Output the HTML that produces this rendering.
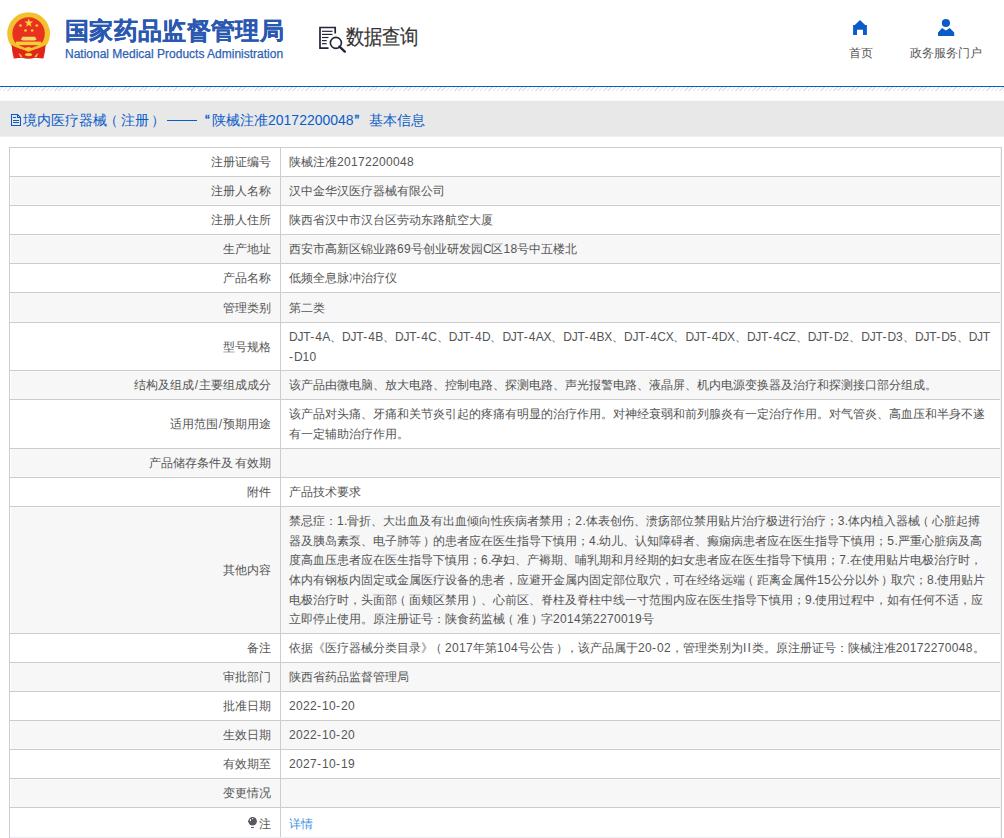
<!DOCTYPE html>
<html><head><meta charset="utf-8">
<style>
*{margin:0;padding:0;box-sizing:border-box}
html,body{width:1004px;height:838px;overflow:hidden;background:#fff}
body{font-family:"Liberation Sans",sans-serif;position:relative;color:#555}
.abs{position:absolute;white-space:nowrap}
#title{left:65px;top:15px;-webkit-text-stroke:.2px #2a58b0;letter-spacing:.35px;font-size:24px;font-weight:bold;color:#2a58b0;line-height:32px}
#sub{left:65px;top:46px;-webkit-text-stroke:.25px #2f5fb3;font-size:12px;color:#2f5fb3;line-height:16px}
#sj{left:346px;top:22px;font-size:18px;color:#333;-webkit-text-stroke:.15px #333;line-height:28px;transform:scaleY(1.14);transform-origin:0 5px}
.nav{font-size:12px;color:#555;line-height:16px}
#bluel{left:0;top:86px;width:1004px;height:1px;background:#0b5cc8}
#stripe{left:0;top:87px;width:1004px;height:4px;
 background:repeating-linear-gradient(135deg,#fff 0,#fff 1.6px,#e2e2e2 1.6px,#e2e2e2 2.6px,#fff 2.6px,#fff 3.01px)}
#bar{left:0;top:101px;width:1004px;height:35px;background:#e8e8e8}
.crumb{top:110px;font-size:14px;color:#0b5cc8;line-height:20px}
#tbl{position:absolute;left:9px;top:147px;width:993px;height:700px;border:1px solid #cdcdcd;border-bottom:none}
.row{position:absolute;left:0;width:990px;border-bottom:1px solid #cdcdcd}
.row.g .bg{position:absolute;left:1px;right:0;top:0;bottom:0;background:#f7f7f7}
.lab{position:absolute;left:0;width:270px;padding-right:9px;top:0;bottom:0;display:flex;align-items:center;justify-content:flex-end;font-size:12px;line-height:19.6px;color:#555}
.div{position:absolute;left:270px;top:0;bottom:0;width:1px;background:#cdcdcd}
.val{position:absolute;left:279px;width:706px;top:0;bottom:0;display:flex;align-items:center;font-size:12px;line-height:19.6px;color:#555;white-space:nowrap}
.lnk{color:#3a8ee6}
.row.last{border-bottom:none}
#strip{left:10px;top:837px;width:990px;height:1px;background:#eceef5}
#rcol{left:1000px;top:148px;width:1px;height:690px;background:#f4f5fa}
.lab span,.val div{position:relative;top:1px}
b{font-weight:normal}
b.d{letter-spacing:.33px}
b.h{letter-spacing:1px}
b.u{letter-spacing:-.25px}
b.s{padding:0 .9px}
b.lp{position:relative;left:-3.5px}
b.rp{position:relative;left:2px}
b.sp{letter-spacing:-1.5px}
b.ii{letter-spacing:1px}
</style></head><body>

<!-- emblem -->
<svg class="abs" style="left:0;top:0" width="60" height="70" viewBox="0 0 60 70">
 <circle cx="28.6" cy="33.6" r="21.4" fill="#f3c12e"/>
 <circle cx="28.6" cy="33.4" r="16.2" fill="#e8321f"/>
 <polygon points="28.8,18.4 29.9,21.5 33.1,21.6 30.6,23.6 31.5,26.7 28.8,24.9 26.1,26.7 27,23.6 24.5,21.6 27.7,21.5" fill="#f7d23a"/>
 <circle cx="20.5" cy="25.5" r="1.35" fill="#f5cf3a"/>
 <circle cx="36.8" cy="25.5" r="1.35" fill="#f5cf3a"/>
 <circle cx="25.5" cy="30.5" r="1.35" fill="#f5cf3a"/>
 <circle cx="32.2" cy="30.5" r="1.35" fill="#f5cf3a"/>
 <polygon points="20.8,39.6 22.5,36.7 35,36.7 36.6,39.6 34.5,40.6 23,40.6" fill="#f7d86e"/>
 <rect x="15.9" y="41.6" width="25.2" height="3.5" fill="#f6cc3c"/>
 <path d="M11.6 45 Q12 52 13.8 58.5 L22 57.8 Q28.5 59.6 35 57.8 L43.4 58.5 Q45.2 52 45.6 45 Q37 50 28.5 50 Q20 50 11.6 45 Z" fill="#e0261c"/>
 <path d="M12.5 43.6 Q21 47.5 28.5 50.6 Q36 47.5 44.6 43.6" fill="none" stroke="#f3c12e" stroke-width="2.3"/>
 <ellipse cx="28.5" cy="48.8" rx="3.2" ry="1.8" fill="#f5cb32"/>
 <ellipse cx="28.5" cy="54.6" rx="3.6" ry="1.6" fill="#f5d03a"/>
 <path d="M18.5 53 Q21 54 22.5 57 L20.5 57 Q19.5 55 18.5 53 Z" fill="#f3d040"/>
 <path d="M38.5 53 Q36 54 34.5 57 L36.5 57 Q37.5 55 38.5 53 Z" fill="#f3d040"/>
</svg>
<div id="title" class="abs">国家药品监督管理局</div>
<div id="sub" class="abs">National Medical Products Administration</div>

<!-- data query icon -->
<svg class="abs" style="left:310px;top:20px" width="40" height="40" viewBox="310 20 40 40">
 <path d="M328.5 48.2 H320 V27.5 H335.2 V33.5" fill="none" stroke="#23233a" stroke-width="1.7"/>
 <g stroke="#23233a" stroke-width="1.2" fill="none">
  <line x1="322" y1="31.3" x2="332.5" y2="31.3"/>
  <line x1="322" y1="34.4" x2="332.5" y2="34.4"/>
  <line x1="322" y1="37.5" x2="328.5" y2="37.5"/>
  <line x1="322" y1="40.6" x2="326.7" y2="40.6"/>
  <line x1="322" y1="43.7" x2="326.7" y2="43.7"/>
 </g>
 <circle cx="335.9" cy="42.9" r="5.5" fill="none" stroke="#23233a" stroke-width="1.6"/>
 <line x1="339.5" y1="46.6" x2="344.8" y2="51.6" stroke="#23233a" stroke-width="2.4" stroke-linecap="round"/>
</svg>
<div id="sj" class="abs">数据查询</div>

<!-- nav -->
<svg class="abs" style="left:850px;top:16px" width="20" height="22" viewBox="850 16 20 22">
 <path d="M853.1 35 V25 H854.9 L860 19.9 L865.1 25 H866.9 V35 H863 V29.7 H857 V35 Z" fill="#0b5cc8"/>
</svg>
<div class="abs nav" style="left:849px;top:45px">首页</div>
<svg class="abs" style="left:934px;top:14px" width="24" height="26" viewBox="934 14 24 26">
 <circle cx="945.9" cy="23" r="4.1" fill="#0b5cc8"/>
 <path d="M938 36 V32.5 L942 27.9 L945.9 30.6 L949.8 27.9 L954.2 32.5 V36 Z" fill="#0b5cc8"/>
</svg>
<div class="abs nav" style="left:910px;top:45px">政务服务门户</div>

<div id="bluel" class="abs"></div>
<div id="stripe" class="abs"></div>
<div id="bar" class="abs"></div>
<div class="abs" style="left:0;top:136px;width:1004px;height:1px;background:#edf0f6"></div>
<div class="abs" style="left:0;top:99px;width:1004px;height:2px;background:linear-gradient(#fff,#f6f6f6)"></div>
<svg class="abs" style="left:10px;top:112px" width="13" height="16" viewBox="10 112 13 16">
 <path d="M11.5 114.5 H17.5 L20.5 117.5 V125.5 H11.5 Z" fill="none" stroke="#0b5cc8" stroke-width="1.05"/>
 <path d="M17.5 114.5 V117.5 H20.5" fill="none" stroke="#0b5cc8" stroke-width="1.05"/>
 <path d="M18 115 L20 117" stroke="#0b5cc8" stroke-width="1"/>
 <g stroke="#0b5cc8" stroke-width="1">
 <line x1="13" y1="117.5" x2="16" y2="117.5"/>
 <line x1="13" y1="120.5" x2="19" y2="120.5"/>
 <line x1="13" y1="122.5" x2="19" y2="122.5"/>
 </g>
</svg>
<div class="abs crumb" style="left:23px">境内医疗器械</div>
<div class="abs crumb" style="left:103.5px">（</div>
<div class="abs crumb" style="left:121px">注册</div>
<div class="abs crumb" style="left:151px">）</div>
<div class="abs" style="left:167px;top:120px;width:30px;height:1px;background:#0b5cc8"></div>
<div class="abs crumb" style="left:205px;-webkit-text-stroke:.4px #0b5cc8">“</div>
<div class="abs crumb" style="left:212px">陕械注准20172200048</div>
<div class="abs crumb" style="left:354.5px;-webkit-text-stroke:.4px #0b5cc8">”</div>
<div class="abs crumb" style="left:369px">基本信息</div>

<div id="rcol" class="abs"></div>
<div id="tbl">
<div class="row" style="top:0px;height:29px"><div class="bg"></div><div class="lab"><span>注册证编号</span></div><div class="div"></div><div class="val"><div>陕械注准<b class="d">20172200048</b></div></div></div>
<div class="row g" style="top:29px;height:29px"><div class="bg"></div><div class="lab"><span>注册人名称</span></div><div class="div"></div><div class="val"><div>汉中金华汉医疗器械有限公司</div></div></div>
<div class="row" style="top:58px;height:29px"><div class="bg"></div><div class="lab"><span>注册人住所</span></div><div class="div"></div><div class="val"><div>陕西省汉中市汉台区劳动东路航空大厦</div></div></div>
<div class="row g" style="top:87px;height:29px"><div class="bg"></div><div class="lab"><span>生产地址</span></div><div class="div"></div><div class="val"><div>西安市高新区锦业路<b class="d">69</b>号创业研发园<b class="u">C</b>区<b class="d">18</b>号中五楼北</div></div></div>
<div class="row" style="top:116px;height:29px"><div class="bg"></div><div class="lab"><span>产品名称</span></div><div class="div"></div><div class="val"><div>低频全息脉冲治疗仪</div></div></div>
<div class="row g" style="top:145px;height:30px"><div class="bg"></div><div class="lab"><span>管理类别</span></div><div class="div"></div><div class="val"><div>第二类</div></div></div>
<div class="row" style="top:175px;height:48px"><div class="bg"></div><div class="lab"><span>型号规格</span></div><div class="div"></div><div class="val"><div><b class="u">DJT</b><b class="h">-</b><b class="d">4</b><b class="u">A</b>、<b class="u">DJT</b><b class="h">-</b><b class="d">4</b><b class="u">B</b>、<b class="u">DJT</b><b class="h">-</b><b class="d">4</b><b class="u">C</b>、<b class="u">DJT</b><b class="h">-</b><b class="d">4</b><b class="u">D</b>、<b class="u">DJT</b><b class="h">-</b><b class="d">4</b><b class="u">AX</b>、<b class="u">DJT</b><b class="h">-</b><b class="d">4</b><b class="u">BX</b>、<b class="u">DJT</b><b class="h">-</b><b class="d">4</b><b class="u">CX</b>、<b class="u">DJT</b><b class="h">-</b><b class="d">4</b><b class="u">DX</b>、<b class="u">DJT</b><b class="h">-</b><b class="d">4</b><b class="u">CZ</b>、<b class="u">DJT</b><b class="h">-</b><b class="u">D</b><b class="d">2</b>、<b class="u">DJT</b><b class="h">-</b><b class="u">D</b><b class="d">3</b>、<b class="u">DJT</b><b class="h">-</b><b class="u">D</b><b class="d">5</b>、<b class="u">DJT</b><br><b class="h">-</b><b class="u">D</b><b class="d">10</b></div></div></div>
<div class="row g" style="top:223px;height:29px"><div class="bg"></div><div class="lab"><span>结构及组成<b class="s">/</b>主要组成成分</span></div><div class="div"></div><div class="val"><div>该产品由微电脑、放大电路、控制电路、探测电路、声光报警电路、液晶屏、机内电源变换器及治疗和探测接口部分组成。</div></div></div>
<div class="row" style="top:252px;height:49px"><div class="bg"></div><div class="lab"><span>适用范围<b class="s">/</b>预期用途</span></div><div class="div"></div><div class="val"><div>该产品对头痛、牙痛和关节炎引起的疼痛有明显的治疗作用。对神经衰弱和前列腺炎有一定治疗作用。对气管炎、高血压和半身不遂<br>有一定辅助治疗作用。</div></div></div>
<div class="row g" style="top:301px;height:29px"><div class="bg"></div><div class="lab"><span>产品储存条件及<b class="sp"> </b>有效期</span></div><div class="div"></div><div class="val"><div></div></div></div>
<div class="row" style="top:330px;height:29px"><div class="bg"></div><div class="lab"><span>附件</span></div><div class="div"></div><div class="val"><div>产品技术要求</div></div></div>
<div class="row g" style="top:359px;height:127px"><div class="bg"></div><div class="lab"><span>其他内容</span></div><div class="div"></div><div class="val"><div>禁忌症：<b class="d">1</b>.骨折、大出血及有出血倾向性疾病者禁用；<b class="d">2</b>.体表创伤、溃疡部位禁用贴片治疗极进行治疗；<b class="d">3</b>.体内植入器械<b class="lp">（</b>心脏起搏<br>器及胰岛素泵、电子肺等<b class="rp">）</b>的患者应在医生指导下慎用；<b class="d">4</b>.幼儿、认知障碍者、癫痫病患者应在医生指导下慎用；<b class="d">5</b>.严重心脏病及高<br>度高血压患者应在医生指导下慎用；<b class="d">6</b>.孕妇、产褥期、哺乳期和月经期的妇女患者应在医生指导下慎用；<b class="d">7</b>.在使用贴片电极治疗时，<br>体内有钢板内固定或金属医疗设备的患者，应避开金属内固定部位取穴，可在经络远端<b class="lp">（</b>距离金属件<b class="d">15</b>公分以外<b class="rp">）</b>取穴；<b class="d">8</b>.使用贴片<br>电极治疗时，头面部<b class="lp">（</b>面颊区禁用<b class="rp">）</b>、心前区、脊柱及脊柱中线一寸范围内应在医生指导下慎用；<b class="d">9</b>.使用过程中，如有任何不适，应<br>立即停止使用。原注册证号：陕食药监械<b class="lp">（</b>准<b class="rp">）</b>字<b class="d">2014</b>第<b class="d">2270019</b>号</div></div></div>
<div class="row" style="top:486px;height:29px"><div class="bg"></div><div class="lab"><span>备注</span></div><div class="div"></div><div class="val"><div>依据《医疗器械分类目录》<b class="lp">（</b><b class="d">2017</b>年第<b class="d">104</b>号公告<b class="rp">）</b>，该产品属于<b class="d">20</b><b class="h">-</b><b class="d">02</b>，管理类别为<b class="ii">II</b>类。原注册证号：陕械注准<b class="d">20172270048</b>。</div></div></div>
<div class="row g" style="top:515px;height:29px"><div class="bg"></div><div class="lab"><span>审批部门</span></div><div class="div"></div><div class="val"><div>陕西省药品监督管理局</div></div></div>
<div class="row" style="top:544px;height:29px"><div class="bg"></div><div class="lab"><span>批准日期</span></div><div class="div"></div><div class="val"><div><b class="d">2022</b><b class="h">-</b><b class="d">10</b><b class="h">-</b><b class="d">20</b></div></div></div>
<div class="row g" style="top:573px;height:29px"><div class="bg"></div><div class="lab"><span>生效日期</span></div><div class="div"></div><div class="val"><div><b class="d">2022</b><b class="h">-</b><b class="d">10</b><b class="h">-</b><b class="d">20</b></div></div></div>
<div class="row" style="top:602px;height:29px"><div class="bg"></div><div class="lab"><span>有效期至</span></div><div class="div"></div><div class="val"><div><b class="d">2027</b><b class="h">-</b><b class="d">10</b><b class="h">-</b><b class="d">19</b></div></div></div>
<div class="row g" style="top:631px;height:29px"><div class="bg"></div><div class="lab"><span>变更情况</span></div><div class="div"></div><div class="val"><div></div></div></div>
<div class="row last" style="top:660px;height:29px"><div class="bg"></div><div class="lab"><span style="top:2px">注</span></div><svg style="position:absolute;left:234px;top:5px" width="14" height="16" viewBox="244 813 14 16"><circle cx="252.6" cy="821.2" r="4.3" fill="#58585e"/><rect x="248" y="821" width="1" height="1" fill="#58585e"/><ellipse cx="250.5" cy="820" rx="0.6" ry="1.2" fill="#fff"/><circle cx="252.7" cy="818.6" r="0.7" fill="#fff"/><rect x="251" y="827" width="3" height="1" fill="#58585e"/></svg><div class="div"></div><div class="val"><div style="top:2px"><span class="lnk">详情</span></div></div></div>
</div>
<div id="strip" class="abs"></div>
</body></html>
